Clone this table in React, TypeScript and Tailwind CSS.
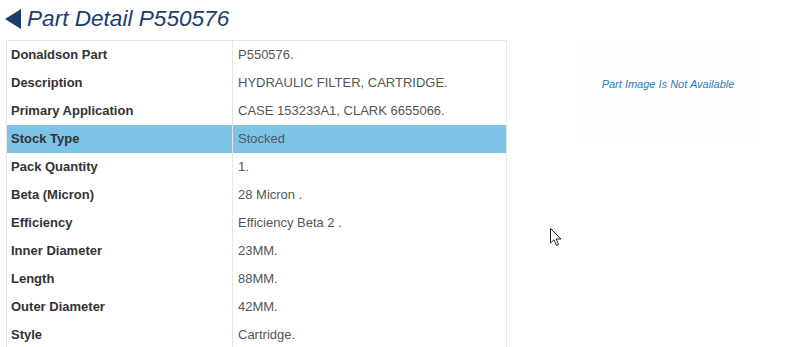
import React from 'react';

const rows: [string, string][] = [
  ['Donaldson Part', 'P550576.'],
  ['Description', 'HYDRAULIC FILTER, CARTRIDGE.'],
  ['Primary Application', 'CASE 153233A1, CLARK 6655066.'],
  ['Stock Type', 'Stocked'],
  ['Pack Quantity', '1.'],
  ['Beta (Micron)', '28 Micron .'],
  ['Efficiency', 'Efficiency Beta 2 .'],
  ['Inner Diameter', '23MM.'],
  ['Length', '88MM.'],
  ['Outer Diameter', '42MM.'],
  ['Style', 'Cartridge.'],
];

export default function App(): JSX.Element {
  return (
    <div className="relative h-[347px] w-[800px] overflow-hidden bg-white font-['Liberation_Sans',Arial,sans-serif]">
      {/* Header */}
      <div className="flex h-[40px] items-start pl-[5px] pt-[6px]">
        <svg width="16" height="20" viewBox="0 0 16 20" className="mt-[3px]">
          <polygon points="16,0 16,20 0,10" fill="#1b3d6e" />
        </svg>
        <h1 className="ml-[6px] text-[22.6px] leading-[26px] italic text-[#1b3d6e]">Part Detail P550576</h1>
      </div>

      <div className="flex items-start pl-[6px]">
        {/* Detail table */}
        <div className="w-[501px] border border-[#e6e6e6]">
          {rows.map(([label, value]) => (
            <div
              key={label}
              className={
                'flex h-[28px] items-center text-[13px] ' +
                (label === 'Stock Type' ? 'bg-[#7dc3e8]' : '')
              }
            >
              <div className="w-[226px] self-stretch flex items-center border-r border-[#e6e6e6] pl-[4px] font-bold text-[#333]">
                {label}
              </div>
              <div className="pl-[5px] text-[#555]">{value}</div>
            </div>
          ))}
        </div>

        {/* Image placeholder */}
        <div className="ml-[76px] mt-[2px] flex h-[100px] w-[170px] items-start justify-center bg-[#fdfdfd] pt-[34px]">
          <span className="text-[11px] italic text-[#2b7db5]">Part Image Is Not Available</span>
        </div>
      </div>

      {/* Mouse cursor */}
      <svg className="absolute left-[550px] top-[228px]" width="12" height="19" viewBox="0 0 12 19">
        <path d="M0.5 0.5 L0.5 15 L4 11.8 L6.5 17.5 L8.6 16.6 L6.2 11 L11 11 Z" fill="#fff" stroke="#222" strokeWidth="1" strokeLinejoin="round" />
      </svg>
    </div>
  );
}
